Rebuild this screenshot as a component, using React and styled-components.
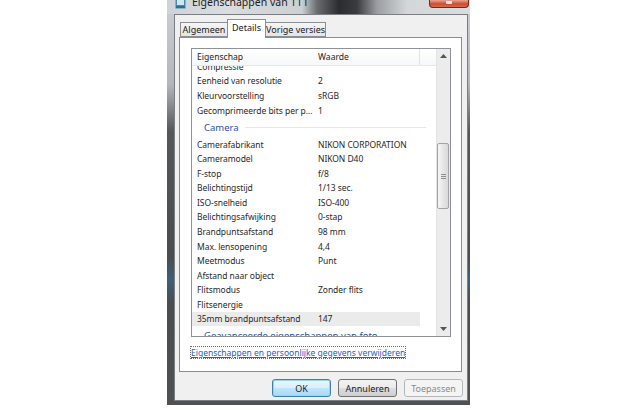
import styled, { createGlobalStyle } from "styled-components";

const GlobalStyle = createGlobalStyle`
  html, body {
    margin: 0;
    background: #ffffff;
  }
  body {
    font-family: "Noto Sans", "Open Sans", sans-serif;
    color: #262626;
  }
`;

const Stage = styled.div`
  width: 640px;
  height: 411px;
  display: flex;
  padding-left: 167px;
  box-sizing: border-box;
  overflow: hidden;
`;

const Window = styled.div`
  width: 303px;
  height: 405px;
  display: flex;
  flex-direction: column;
`;

const TitleBar = styled.div`
  height: 14px;
  flex: none;
  display: flex;
  align-items: flex-start;
  overflow: hidden;
  padding-left: 8px;
  background: linear-gradient(
    to right,
    #cfd3d7 0px,
    #dadde0 60px,
    #cdd0d3 135px,
    #6a6d70 150px,
    #2a2c2e 172px,
    #3a3c3f 190px,
    #9a9da1 210px,
    #d4d7da 240px,
    #dadde0 303px
  );
`;

const TitleIcon = styled.svg`
  width: 11px;
  height: 9px;
  flex: none;
`;

const TitleText = styled.span`
  font-size: 10.5px;
  line-height: 12px;
  margin-top: -4px;
  margin-left: 6px;
  color: #1d1d1d;
  white-space: nowrap;
`;

const CloseButton = styled.div`
  margin-left: auto;
  margin-right: 1px;
  width: 38px;
  height: 7px;
  flex: none;
  display: flex;
  justify-content: center;
  border: 1px solid #6e2a1d;
  border-top: none;
  border-radius: 0 0 4px 4px;
  background: linear-gradient(#e9a593, #cf4c31 55%, #d86b47);
`;

const CloseMark = styled.div`
  width: 6px;
  height: 3px;
  margin-top: 1px;
  background: #f4e6e2;
  border-radius: 0 0 1px 1px;
`;

const Frame = styled.div`
  flex: 1;
  display: flex;
  padding: 0 2px 4px 7px;
  background: linear-gradient(
    to bottom,
    #c8ccd0 0%,
    #b3b7bb 18%,
    #555759 30%,
    #4b4c4e 62%,
    #3f5f7a 68%,
    #4b4c4e 74%,
    #505153 100%
  );
`;

const Client = styled.div`
  flex: 1;
  display: flex;
  flex-direction: column;
  background: #f0f0f0;
  border: 1px solid #7a7d81;
  padding: 4px 4px 3px 4px;
`;

const TabRow = styled.div`
  height: 18px;
  flex: none;
  display: flex;
  align-items: flex-end;
  padding-left: 1px;
  position: relative;
  z-index: 1;
`;

const Tab = styled.div`
  width: ${(p) => p.$w}px;
  height: ${(p) => (p.$active ? 19 : 15)}px;
  margin-bottom: ${(p) => (p.$active ? -1 : 0)}px;
  margin-left: ${(p) => (p.$first ? 0 : -1)}px;
  box-sizing: border-box;
  border: 1px solid #8c8f94;
  border-bottom: ${(p) => (p.$active ? "none" : "1px solid #8c8f94")};
  background: ${(p) =>
    p.$active ? "#ffffff" : "linear-gradient(#f5f5f5, #e4e4e4)"};
  font-size: 9px;
  line-height: ${(p) => (p.$active ? 15 : 13)}px;
  text-align: center;
  color: #202020;
  white-space: nowrap;
`;

const Panel = styled.div`
  height: 335px;
  flex: none;
  box-sizing: border-box;
  display: flex;
  flex-direction: column;
  margin-right: 1px;
  border: 1px solid #898c95;
  background: #ffffff;
  padding: 10px 10px 0 11px;
`;

const ListView = styled.div`
  height: 289px;
  flex: none;
  box-sizing: border-box;
  display: flex;
  border: 1px solid #8e9196;
  background: #ffffff;
`;

const ListMain = styled.div`
  flex: 1;
  min-width: 0;
  display: flex;
  flex-direction: column;
  overflow: hidden;
`;

const Header = styled.div`
  height: 17px;
  flex: none;
  display: flex;
  box-sizing: border-box;
  border-bottom: 1px solid #e6e8eb;
  background: linear-gradient(#ffffff, #f6f7f8);
  position: relative;
  z-index: 1;
`;

const HeaderCell = styled.div`
  width: ${(p) => p.$w}px;
  flex: none;
  box-sizing: border-box;
  padding-left: 5px;
  font-size: 8.6px;
  line-height: 17px;
  color: #262626;
  border-right: ${(p) => (p.$divider ? "1px solid #e2e3e5" : "none")};
`;

const Body = styled.div`
  flex: 1;
  overflow: hidden;
`;

const Scroller = styled.div`
  margin-top: -6.9px;
`;

const Row = styled.div`
  width: 228px;
  height: 14.57px;
  display: flex;
  align-items: center;
  background: ${(p) => (p.$hl ? "#ebebeb" : "transparent")};
`;

const Cell = styled.div`
  width: ${(p) => p.$w}px;
  flex: none;
  box-sizing: border-box;
  padding-left: 5px;
  font-size: 8.5px;
  letter-spacing: -0.05px;
  white-space: nowrap;
  overflow: hidden;
  color: #282828;
`;

const GroupRow = styled.div`
  height: 19.5px;
  display: flex;
  align-items: center;
  padding-left: 12px;
`;

const GroupTitle = styled.span`
  font-size: 9.5px;
  color: #2752a8;
  white-space: nowrap;
`;

const GroupLine = styled.div`
  flex: 1;
  height: 1px;
  margin: 1px 10px 0 6px;
  background: #e3e8ef;
`;

const Scrollbar = styled.div`
  width: 14px;
  flex: none;
  display: flex;
  flex-direction: column;
  background: #ececec;
  border-left: 1px solid #e4e4e4;
  box-sizing: border-box;
`;

const Arrow = styled.div`
  height: 14px;
  flex: none;
  display: flex;
  align-items: center;
  justify-content: center;
`;

const Track = styled.div`
  flex: 1;
  display: flex;
  flex-direction: column;
`;

const Thumb = styled.div`
  margin: 80px 1px 0 0;
  height: 66px;
  box-sizing: border-box;
  display: flex;
  flex-direction: column;
  align-items: center;
  justify-content: center;
  gap: 1px;
  border: 1px solid #a3a3a3;
  border-radius: 2px;
  background: linear-gradient(to right, #f6f6f6, #e6e6e6 50%, #d9d9d9);
`;

const Grip = styled.div`
  width: 5px;
  height: 1px;
  background: #8e8e8e;
`;

const Link = styled.a`
  align-self: flex-start;
  margin-top: 10px;
  font-size: 8.5px;
  line-height: 11px;
  color: #2a60c2;
  text-decoration: underline;
  outline: 1px dotted #6a6a6a;
  white-space: nowrap;
`;

const ButtonRow = styled.div`
  display: flex;
  justify-content: flex-end;
  gap: 7px;
  margin-top: 7px;
`;

const Button = styled.div`
  width: 59px;
  height: 18px;
  box-sizing: border-box;
  display: flex;
  align-items: center;
  justify-content: center;
  font-size: 9px;
  border-radius: 3px;
  border: 1px solid
    ${(p) => (p.$default ? "#3c7fb1" : p.$disabled ? "#b5b8bb" : "#707070")};
  background: ${(p) =>
    p.$disabled
      ? "#f4f4f4"
      : p.$default
      ? "linear-gradient(#eaf6fd, #d9f0fc 50%, #bee6fd 51%, #a7d9f5)"
      : "linear-gradient(#f2f2f2, #ebebeb 50%, #dddddd 51%, #cfcfcf)"};
  box-shadow: ${(p) => (p.$default ? "inset 0 0 0 1px #9fd2f0" : "none")};
  color: ${(p) => (p.$disabled ? "#8a8a8a" : "#1e1e1e")};
`;

const rowsTop = [
  ["Compressie", ""],
  ["Eenheid van resolutie", "2"],
  ["Kleurvoorstelling", "sRGB"],
  ["Gecomprimeerde bits per p...", "1"],
];

const rowsCamera = [
  ["Camerafabrikant", "NIKON CORPORATION"],
  ["Cameramodel", "NIKON D40"],
  ["F-stop", "f/8"],
  ["Belichtingstijd", "1/13 sec."],
  ["ISO-snelheid", "ISO-400"],
  ["Belichtingsafwijking", "0-stap"],
  ["Brandpuntsafstand", "98 mm"],
  ["Max. lensopening", "4,4"],
  ["Meetmodus", "Punt"],
  ["Afstand naar object", ""],
  ["Flitsmodus", "Zonder flits"],
  ["Flitsenergie", ""],
  ["35mm brandpuntsafstand", "147"],
];

const PropRow = ({ name, value, hl }) => (
  <Row $hl={hl}>
    <Cell $w={121}>{name}</Cell>
    <Cell $w={107}>{value}</Cell>
  </Row>
);

const App = () => {
  return (
    <>
      <GlobalStyle />
      <Stage>
        <Window>
          <TitleBar>
            <TitleIcon viewBox="0 0 11 9">
              <rect x="0.5" y="0" width="10" height="8.5" fill="#3f8fb0" />
              <rect x="2" y="0" width="7" height="5" fill="#cfe7f1" />
              <rect x="1" y="6" width="9" height="2" fill="#2d6f8c" />
            </TitleIcon>
            <TitleText>Eigenschappen van 111</TitleText>
            <CloseButton>
              <CloseMark />
            </CloseButton>
          </TitleBar>
          <Frame>
            <Client>
              <TabRow>
                <Tab $w={48} $first>
                  Algemeen
                </Tab>
                <Tab $w={39} $active>
                  Details
                </Tab>
                <Tab $w={61}>Vorige versies</Tab>
              </TabRow>
              <Panel>
                <ListView>
                  <ListMain>
                    <Header>
                      <HeaderCell $w={121}>Eigenschap</HeaderCell>
                      <HeaderCell $w={107} $divider>
                        Waarde
                      </HeaderCell>
                    </Header>
                    <Body>
                      <Scroller>
                        {rowsTop.map(([n, v]) => (
                          <PropRow key={n} name={n} value={v} />
                        ))}
                        <GroupRow>
                          <GroupTitle>Camera</GroupTitle>
                          <GroupLine />
                        </GroupRow>
                        {rowsCamera.map(([n, v], i) => (
                          <PropRow
                            key={n}
                            name={n}
                            value={v}
                            hl={i === rowsCamera.length - 1}
                          />
                        ))}
                        <GroupRow>
                          <GroupTitle>
                            Geavanceerde eigenschappen van foto
                          </GroupTitle>
                          <GroupLine />
                        </GroupRow>
                      </Scroller>
                    </Body>
                  </ListMain>
                  <Scrollbar>
                    <Arrow>
                      <svg width="7" height="4" viewBox="0 0 7 4">
                        <path d="M0 4 L3.5 0 L7 4 Z" fill="#555" />
                      </svg>
                    </Arrow>
                    <Track>
                      <Thumb>
                        <Grip />
                        <Grip />
                        <Grip />
                      </Thumb>
                    </Track>
                    <Arrow>
                      <svg width="7" height="4" viewBox="0 0 7 4">
                        <path d="M0 0 L7 0 L3.5 4 Z" fill="#555" />
                      </svg>
                    </Arrow>
                  </Scrollbar>
                </ListView>
                <Link>Eigenschappen en persoonlijke gegevens verwijderen</Link>
              </Panel>
              <ButtonRow>
                <Button $default>OK</Button>
                <Button>Annuleren</Button>
                <Button $disabled>Toepassen</Button>
              </ButtonRow>
            </Client>
          </Frame>
        </Window>
      </Stage>
    </>
  );
};

export default App;
